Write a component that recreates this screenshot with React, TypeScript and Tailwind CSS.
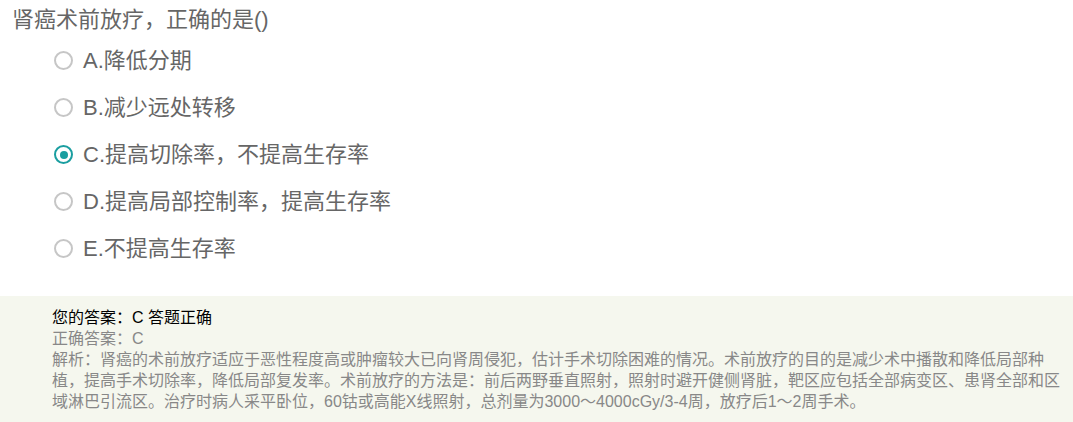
import React, { useState } from "react";

const options = [
  { key: "A", text: "降低分期" },
  { key: "B", text: "减少远处转移" },
  { key: "C", text: "提高切除率，不提高生存率" },
  { key: "D", text: "提高局部控制率，提高生存率" },
  { key: "E", text: "不提高生存率" },
];

const font = { fontFamily: '"Liberation Sans", "Noto Sans CJK SC", sans-serif' };

const Radio: React.FC<{ checked: boolean }> = ({ checked }) => (
  <span
    className={
      checked
        ? "flex h-[19px] w-[19px] shrink-0 items-center justify-center rounded-full border-2 border-[#1a9ea0] bg-white"
        : "flex h-[19px] w-[19px] shrink-0 items-center justify-center rounded-full border-2 border-[#c6c6c6] bg-white"
    }
  >
    {checked && <span className="h-[8px] w-[8px] rounded-full bg-[#1a9ea0]" />}
  </span>
);

const App: React.FC = () => {
  const [picked, setPicked] = useState("C");

  return (
    <div className="min-h-screen bg-white" style={font}>
      {/* question */}
      <div className="h-[37px] pl-[12px] pt-[8px] text-[22px] leading-[24px] text-[#666]">
        肾癌术前放疗，正确的是()
      </div>

      {/* options */}
      <div className="pl-[54px]">
        {options.map((o) => (
          <div
            key={o.key}
            onClick={() => setPicked(o.key)}
            className="flex h-[47px] cursor-pointer items-center gap-[10px]"
          >
            <Radio checked={picked === o.key} />
            <span className="text-[22px] leading-[24px] text-[#666]">
              {o.key}.{o.text}
            </span>
          </div>
        ))}
      </div>

      {/* answer panel */}
      <div className="mt-[24px] bg-[#f5f7ee] pb-[14px] pl-[52px] pr-[10px] pt-[11px] text-[16px] leading-[21px]">
        <div className="text-black">您的答案：C 答题正确</div>
        <div className="text-[#888]">正确答案：C</div>
        <div className="text-[#888]">
          解析：肾癌的术前放疗适应于恶性程度高或肿瘤较大已向肾周侵犯，估计手术切除困难的情况。术前放疗的目的是减少术中播散和降低局部种植，提高手术切除率，降低局部复发率。术前放疗的方法是：前后两野垂直照射，照射时避开健侧肾脏，靶区应包括全部病变区、患肾全部和区域淋巴引流区。治疗时病人采平卧位，60钴或高能X线照射，总剂量为3000～4000cGy/3-4周，放疗后1～2周手术。
        </div>
      </div>
    </div>
  );
};

export default App;
